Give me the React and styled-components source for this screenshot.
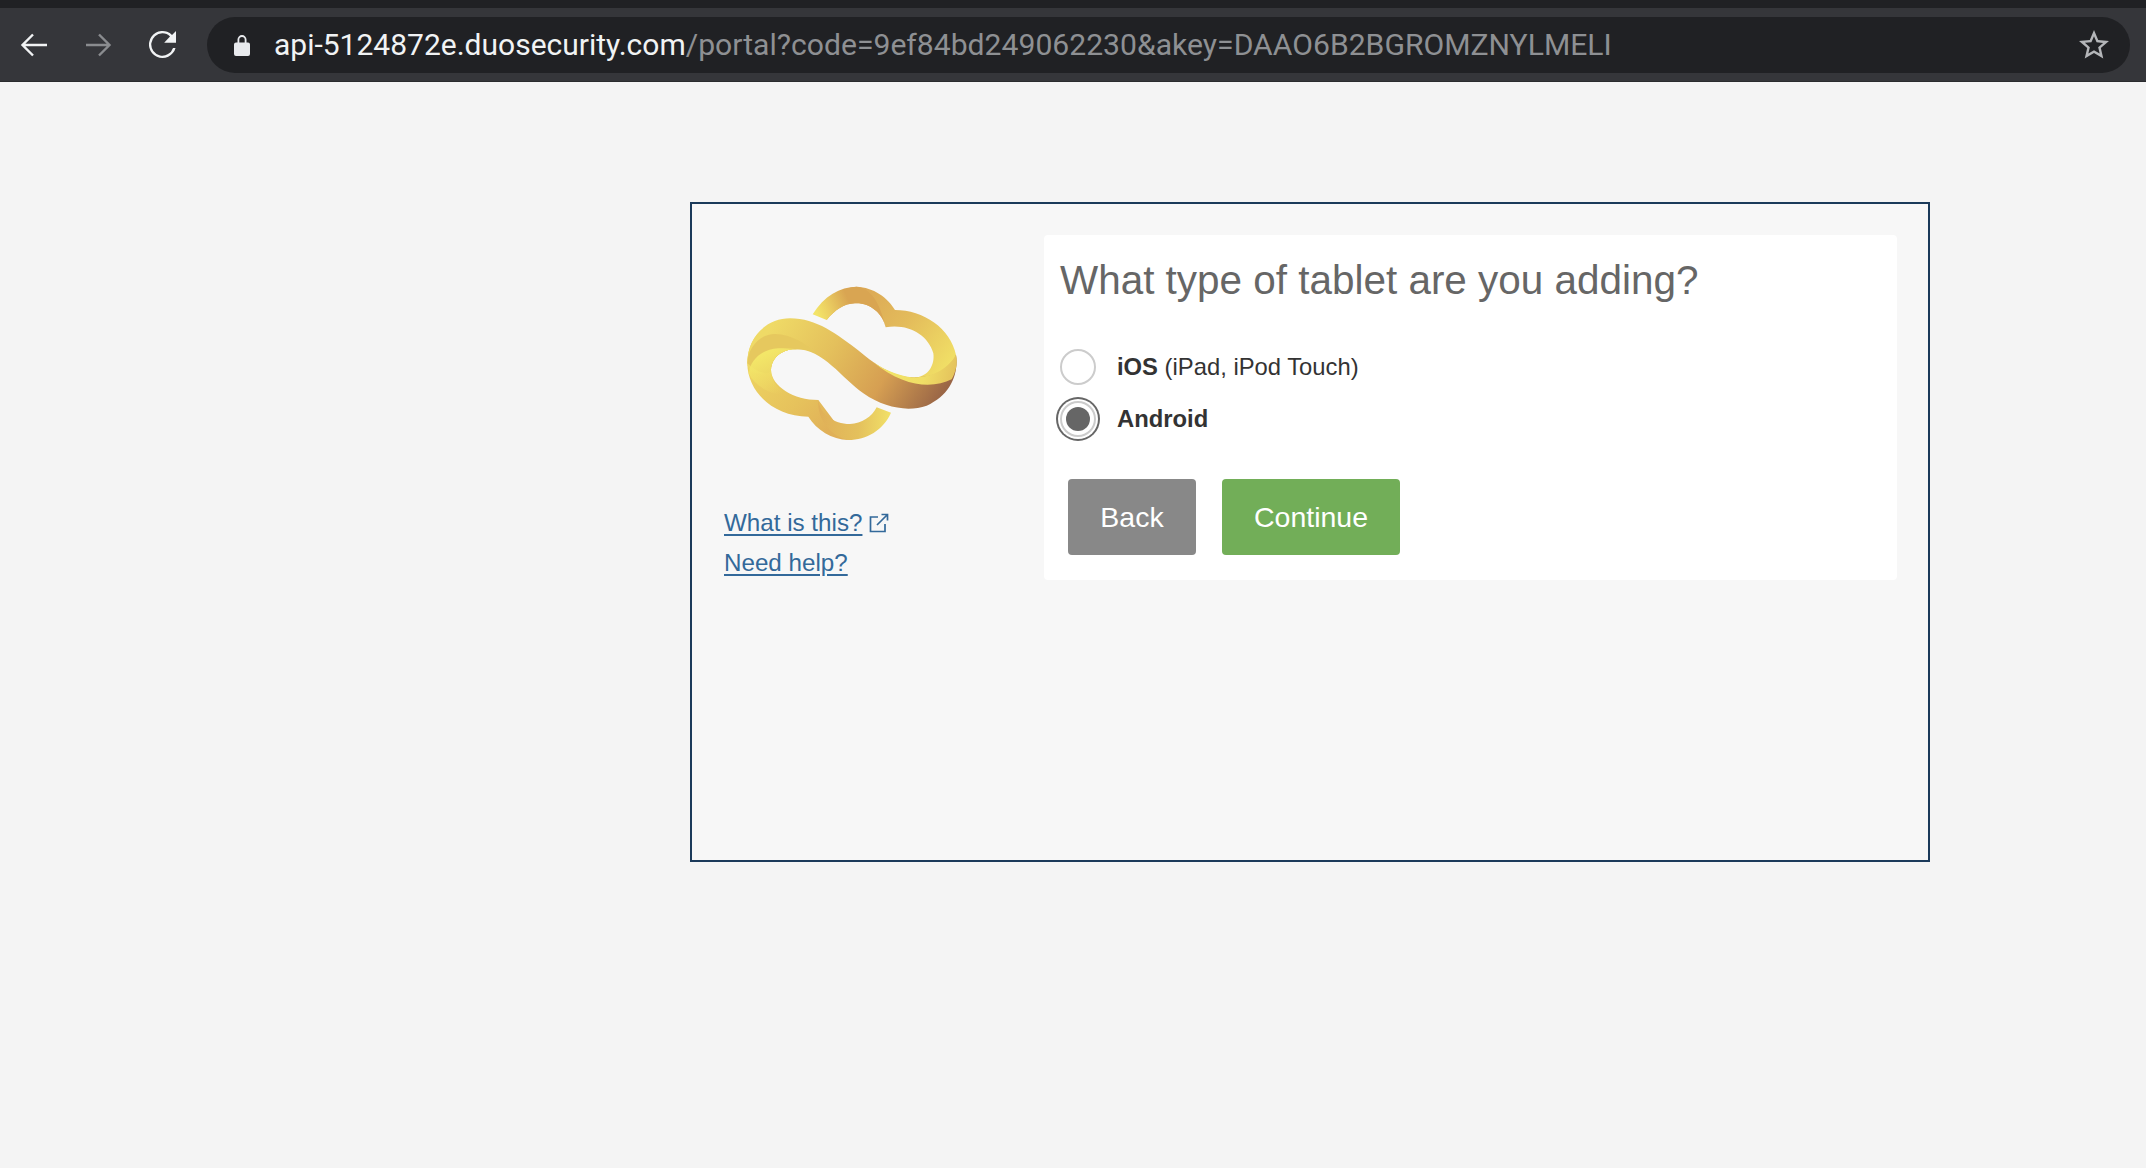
import React from 'react';
import styled, { createGlobalStyle } from 'styled-components';

const GlobalStyle = createGlobalStyle`
  html, body {
    margin: 0;
    padding: 0;
    height: 100%;
    background: #f4f4f4;
  }
  body {
    font-family: "Liberation Sans", Arial, sans-serif;
  }
`;

const Page = styled.div`
  width: 2146px;
  height: 1168px;
  overflow: hidden;
  display: flex;
  flex-direction: column;
  background: #f4f4f4;
`;

const BrowserBar = styled.header`
  height: 82px;
  box-sizing: border-box;
  background: #35363a;
  border-top: 8px solid #202124;
  border-bottom: 1px solid #2a2b2e;
  display: flex;
  align-items: center;
  padding-left: 20px;
  padding-right: 16px;
`;

const NavButton = styled.span`
  width: ${props => props.$width}px;
  display: flex;
  color: ${props => props.$color};
`;

const Omnibox = styled.div`
  flex: 1;
  height: 56px;
  border-radius: 28px;
  background: #202124;
  display: flex;
  align-items: center;
  padding-left: 27px;
  padding-right: 21px;
  font-family: Roboto, sans-serif;
  font-size: 30px;
  white-space: nowrap;
`;

const LockIcon = styled.span`
  display: flex;
  color: #e8eaed;
  margin-right: 24px;
`;

const Host = styled.span`
  color: #f1f3f4;
`;

const UrlRest = styled.span`
  flex: 1;
  color: #8e9093;
  font-size: 30.13px;
`;

const StarIcon = styled.span`
  display: flex;
  color: #b4b6b9;
`;

const Panel = styled.main`
  width: 1240px;
  height: 660px;
  margin-top: 120px;
  margin-left: 690px;
  box-sizing: border-box;
  border: 2px solid #1b3a5a;
  background: #f7f7f7;
  display: flex;
  align-items: flex-start;
`;

const SideColumn = styled.aside`
  width: 352px;
  box-sizing: border-box;
  padding-left: 32px;
  padding-top: 56px;
`;

const Logo = styled.svg`
  display: block;
  width: 260px;
  height: 200px;
  margin-left: -4px;
`;

const SideLinks = styled.div`
  margin-top: 50px;
  display: flex;
  flex-direction: column;
  gap: 14px;
`;

const SideLink = styled.a`
  display: flex;
  align-items: center;
  gap: 7px;
  height: 26px;
  font-size: 24.2px;
  color: #33699a;
`;

const LinkText = styled.span`
  text-decoration: underline;
  text-underline-offset: 3px;
`;

const Card = styled.section`
  width: 853px;
  height: 345px;
  margin-top: 31px;
  box-sizing: border-box;
  background: #ffffff;
  border-radius: 4px;
  padding: 22px 16px 0;
`;

const Heading = styled.h1`
  margin: 0;
  font-size: 40.45px;
  line-height: 46px;
  font-weight: 400;
  color: #666666;
`;

const Options = styled.div`
  margin-top: 46px;
  display: flex;
  flex-direction: column;
  gap: 16px;
`;

const Option = styled.label`
  display: flex;
  align-items: center;
  gap: 21px;
  height: 36px;
  font-size: 23.8px;
  color: #333333;
`;

const Radio = styled.span`
  width: 36px;
  height: 36px;
  flex: none;
  box-sizing: border-box;
  border-radius: 50%;
  border: 2px solid #cccccc;
  background: #ffffff;
  display: flex;
  align-items: center;
  justify-content: center;
  box-shadow: ${props => (props.$checked ? '0 0 0 2px #fff, 0 0 0 4px #666' : 'none')};
`;

const RadioDot = styled.span`
  width: 24px;
  height: 24px;
  border-radius: 50%;
  background: #666666;
`;

const Actions = styled.div`
  margin-top: 42px;
  margin-left: 8px;
  display: flex;
  gap: 26px;
`;

const Button = styled.button`
  width: ${props => props.$width}px;
  height: 76px;
  border: 0;
  border-radius: 4px;
  background: ${props => props.$bg};
  color: #ffffff;
  font-family: "Liberation Sans", Arial, sans-serif;
  font-size: 28.5px;
  padding: 0;
`;

const BackArrow = () => (
  <svg width="28" height="24" viewBox="0 0 28 24" fill="none" stroke="currentColor" strokeWidth="2.4">
    <path d="M27 12H3M13 1.5L2.5 12L13 22.5" />
  </svg>
);

const ForwardArrow = () => (
  <svg width="26" height="24" viewBox="0 0 26 24" fill="none" stroke="currentColor" strokeWidth="2.4">
    <path d="M0 12H23M13 1.5L23.5 12L13 22.5" />
  </svg>
);

const ReloadIcon = () => (
  <svg width="27" height="27" viewBox="4 4 16 16" fill="currentColor">
    <path d="M17.65 6.35A8 8 0 1 0 19.73 14h-1.5A6.6 6.6 0 1 1 12 5.4c1.8 0 3.3.72 4.45 1.9L13 11h7V4l-2.35 2.35z" />
  </svg>
);

const PadLock = () => (
  <svg width="16" height="22" viewBox="0 0 16 22" fill="currentColor">
    <path d="M2 8.5h1.5V5.6a4.5 4.5 0 0 1 9 0v2.9H14a2 2 0 0 1 2 2V20a2 2 0 0 1-2 2H2a2 2 0 0 1-2-2v-9.5a2 2 0 0 1 2-2zM5.3 8.5h5.4V5.6a2.7 2.7 0 0 0-5.4 0z" />
  </svg>
);

const BookmarkStar = () => (
  <svg width="30" height="29" viewBox="2 2 20 19.2" fill="currentColor">
    <path d="M22 9.24l-7.19-.62L12 2 9.19 8.63 2 9.24l5.46 4.73L5.82 21 12 17.27 18.18 21l-1.63-7.03L22 9.24zM12 15.4l-3.76 2.27 1-4.28-3.32-2.88 4.38-.38L12 6.1l1.71 4.04 4.38.38-3.32 2.88 1 4.28L12 15.4z" />
  </svg>
);

const InfinityCloud = () => (
  <Logo viewBox="0 0 780 600">
    <defs>
      <linearGradient id="loopTop" gradientUnits="userSpaceOnUse" x1="420" y1="110" x2="690" y2="320">
        <stop offset="0" stopColor="#dca955" />
        <stop offset="0.45" stopColor="#e3bb5b" />
        <stop offset="1" stopColor="#f1e066" />
      </linearGradient>
      <linearGradient id="tipTop" gradientUnits="userSpaceOnUse" x1="290" y1="160" x2="385" y2="120">
        <stop offset="0" stopColor="#f3e468" />
        <stop offset="0.35" stopColor="#ecd062" />
        <stop offset="1" stopColor="#d9a552" />
      </linearGradient>
      <linearGradient id="loopBottom" gradientUnits="userSpaceOnUse" x1="90" y1="300" x2="330" y2="510">
        <stop offset="0" stopColor="#eed462" />
        <stop offset="0.6" stopColor="#e6c25c" />
        <stop offset="1" stopColor="#e0b058" />
      </linearGradient>
      <linearGradient id="tipBottom" gradientUnits="userSpaceOnUse" x1="300" y1="470" x2="510" y2="480">
        <stop offset="0" stopColor="#e0b058" />
        <stop offset="0.55" stopColor="#e4c05c" />
        <stop offset="1" stopColor="#f1e068" />
      </linearGradient>
      <linearGradient id="ribbon" gradientUnits="userSpaceOnUse" x1="170" y1="170" x2="640" y2="450">
        <stop offset="0" stopColor="#efda66" />
        <stop offset="0.35" stopColor="#e4c05c" />
        <stop offset="0.68" stopColor="#d69f52" />
        <stop offset="1" stopColor="#9a6646" />
      </linearGradient>
      <linearGradient id="sheen" gradientUnits="userSpaceOnUse" x1="120" y1="290" x2="175" y2="405">
        <stop offset="0" stopColor="#f3e668" />
        <stop offset="1" stopColor="#f3e668" stopOpacity="0" />
      </linearGradient>
      <linearGradient id="wedge" gradientUnits="userSpaceOnUse" x1="480" y1="320" x2="700" y2="370">
        <stop offset="0" stopColor="#f3e668" />
        <stop offset="0.6" stopColor="#f0de66" />
        <stop offset="1" stopColor="#e4c25c" />
      </linearGradient>
    </defs>
    <path
      fill="url(#loopTop)"
      d="M320 150C345 108 375 80 410 80C460 82 503 112 525 150C610 150 692 205 708 285C716 330 700 365 660 390L590 352C625 348 645 315 640 280C625 225 565 190 497 202C488 160 450 128 405 130C372 131 345 150 320 180Z"
    />
    <path
      fill="url(#tipTop)"
      d="M278 163C312 108 360 80 410 80C450 85 478 120 497 202C488 160 450 128 405 130C372 131 345 150 320 180Z"
    />
    <path
      fill="url(#loopBottom)"
      d="M82 310C82 260 105 215 150 195L230 268C190 266 155 290 153 330C155 380 222 420 295 420L385 540C335 538 290 510 265 470C160 470 82 395 82 310Z"
    />
    <path
      fill="url(#tipBottom)"
      d="M295 420C300 462 340 492 390 492C425 490 455 472 470 442L513 458C490 510 440 540 385 540C335 530 290 480 295 420Z"
    />
    <path
      fill="url(#ribbon)"
      d="M82 310C82 230 140 175 210 175C290 175 350 222 420 275C470 318 530 355 590 352C650 350 695 325 708 285C716 345 690 405 620 437C565 456 495 445 430 400C365 355 310 268 230 268C190 266 155 290 153 330C120 350 82 340 82 310Z"
    />
    <path
      fill="#e6c85e"
      d="M82 310C84 262 120 222 165 222C215 224 255 248 290 282C265 270 250 268 230 268C190 266 155 290 153 330C150 345 120 345 82 310Z"
    />
    <path
      fill="url(#sheen)"
      d="M86 340C92 298 125 268 175 265C195 265 210 266 230 268C190 266 155 290 153 330C155 365 175 395 215 408C150 405 105 380 86 340Z"
    />
    <path
      fill="url(#wedge)"
      d="M458 305C500 335 550 352 590 352C640 350 685 325 708 285C713 310 708 335 695 358C640 385 555 385 458 305Z"
    />
  </Logo>
);

const ExternalIcon = () => (
  <svg width="20" height="20" viewBox="0 0 20 20" fill="none" stroke="#33699a" strokeWidth="1.7">
    <path d="M9 4H1.5V18.5H16V11" />
    <path d="M8 12L18 2M12.5 1.5H18.5V7.5" />
  </svg>
);

export default function App() {
  return (
    <Page>
      <GlobalStyle />
      <BrowserBar>
        <NavButton $width={66} $color="#f1f3f4">
          <BackArrow />
        </NavButton>
        <NavButton $width={63} $color="#8a8c8f">
          <ForwardArrow />
        </NavButton>
        <NavButton $width={58} $color="#f1f3f4">
          <ReloadIcon />
        </NavButton>
        <Omnibox>
          <LockIcon>
            <PadLock />
          </LockIcon>
          <Host>api-5124872e.duosecurity.com</Host>
          <UrlRest>/portal?code=9ef84bd249062230&amp;akey=DAAO6B2BGROMZNYLMELI</UrlRest>
          <StarIcon>
            <BookmarkStar />
          </StarIcon>
        </Omnibox>
      </BrowserBar>
      <Panel>
        <SideColumn>
          <InfinityCloud />
          <SideLinks>
            <SideLink>
              <LinkText>What is this?</LinkText>
              <ExternalIcon />
            </SideLink>
            <SideLink>
              <LinkText>Need help?</LinkText>
            </SideLink>
          </SideLinks>
        </SideColumn>
        <Card>
          <Heading>What type of tablet are you adding?</Heading>
          <Options>
            <Option>
              <Radio />
              <span>
                <b>iOS</b> (iPad, iPod Touch)
              </span>
            </Option>
            <Option>
              <Radio $checked>
                <RadioDot />
              </Radio>
              <b>Android</b>
            </Option>
          </Options>
          <Actions>
            <Button $width={128} $bg="#888888">Back</Button>
            <Button $width={178} $bg="#72ae58">Continue</Button>
          </Actions>
        </Card>
      </Panel>
    </Page>
  );
}
